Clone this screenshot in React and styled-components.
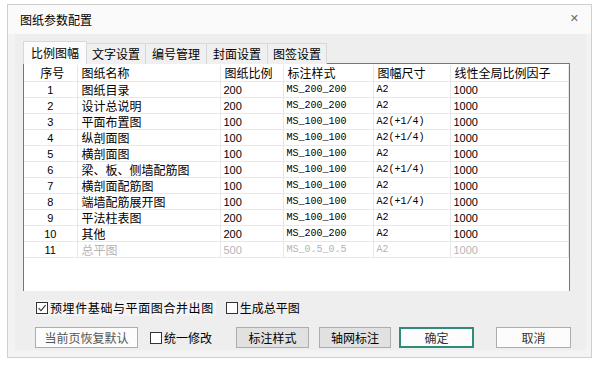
import React from 'react'
import styled, { createGlobalStyle } from 'styled-components'

const GlobalStyle = createGlobalStyle`
  body {
    margin: 0;
    background: #ffffff;
    font-family: "Noto Sans CJK SC", sans-serif;
    font-size: 12px;
    color: #000;
  }
`

const Dialog = styled.div`
  box-sizing: border-box;
  margin: 4px 0 0 7px;
  width: 585px;
  height: 354px;
  border: 1px solid #cfcfcf;
  background: #f3f3f3;
  display: flex;
  flex-direction: column;
`

const TitleBar = styled.div`
  height: 29px;
  flex: none;
  background: #fafafa;
  display: flex;
  align-items: center;
  justify-content: space-between;
  padding: 0 12px;
  font-size: 12px;
  line-height: 12px;
`

const Close = styled.span`
  font-family: "DejaVu Sans", sans-serif;
  font-size: 11px;
  color: #6a6a6a;
  margin-top: -1px;
`

const Body = styled.div`
  flex: 1;
  padding: 0 7px 7px 7px;
  display: flex;
`

const Inner = styled.div`
  flex: 1;
  background: #eeeeee;
  padding: 7px 16px 0 8px;
  display: flex;
  flex-direction: column;
`

const Tabs = styled.div`
  display: flex;
  align-items: flex-end;
  height: 23px;
  margin-left: 1px;
`

const Tab = styled.div`
  box-sizing: border-box;
  height: ${p => (p.$active ? '23px' : '21px')};
  padding: 0 ${p => p.$pad || 5}px;
  display: flex;
  align-items: center;
  font-size: 12px;
  line-height: 12px;
  background: ${p => (p.$active ? '#fbfbfb' : '#f0f0f0')};
  border: 1px solid #d8d8d8;
  border-bottom: none;
  margin-left: -1px;
  position: relative;
  z-index: ${p => (p.$active ? 1 : 0)};
`

const Panel = styled.div`
  box-sizing: border-box;
  height: 228px;
  background: #ffffff;
  border: 1px solid #767676;
  border-bottom: none;
  padding: 1px 0 0 0;
  margin-top: -1px;
`

const Table = styled.table`
  border-collapse: collapse;
  table-layout: fixed;
  width: 544px;
`

const Head = styled.th`
  height: 16px;
  padding: 0 0 0 4px;
  font-weight: normal;
  font-size: 12px;
  line-height: 14px;
  text-align: ${p => (p.$center ? 'center' : 'left')};
  border-right: 1px solid #e8e8e8;
  border-bottom: 1px solid #e8e8e8;
  white-space: nowrap;
  overflow: hidden;
`

const Cell = styled.td`
  height: 15px;
  padding: 0 0 0 ${p => (p.$center ? 0 : p.$pad || 4)}px;
  font-family: ${p =>
    p.$mono
      ? '"Liberation Mono", "Noto Sans CJK SC", monospace'
      : p.$num
        ? '"Liberation Sans", "Noto Sans CJK SC", sans-serif'
        : '"Noto Sans CJK SC", sans-serif'};
  font-size: ${p => (p.$mono ? 10 : p.$num ? 11 : 12)}px;
  line-height: 14px;
  text-align: ${p => (p.$center ? 'center' : 'left')};
  color: ${p => (p.$off ? '#b4b4b4' : '#000')};
  border-right: 1px solid #e8e8e8;
  border-bottom: 1px solid #e8e8e8;
  white-space: nowrap;
  overflow: hidden;
`

const Options = styled.div`
  display: flex;
  flex-direction: column;
  padding: 9px 0 0 12px;
  margin-right: -16px;
  gap: 11px;
`

const Row = styled.div`
  display: flex;
  align-items: center;
`

const CheckLabel = styled.label`
  flex: none;
  display: flex;
  align-items: center;
  gap: 2px;
  height: 16px;
  padding: 0 2px 0 1px;
  font-size: 12px;
  line-height: 12px;
  color: #000;
  white-space: nowrap;
  letter-spacing: ${p => p.$ls || 0}px;
  background: ${p => (p.$focus ? '#f4f4f4' : 'transparent')};
  margin-right: ${p => p.$mr || 0}px;
`

const Box = styled.span`
  box-sizing: border-box;
  width: 12px;
  height: 12px;
  border: 1px solid #333;
  background: #fff;
  display: flex;
  align-items: center;
  justify-content: center;
`

const Button = styled.button`
  flex: none;
  box-sizing: border-box;
  width: ${p => p.$w}px;
  height: 21px;
  padding: 0;
  margin-right: ${p => p.$mr || 0}px;
  font-family: "Noto Sans CJK SC", sans-serif;
  font-size: 12px;
  line-height: 12px;
  white-space: nowrap;
  color: ${p => p.$color || '#000'};
  background: ${p => (p.$gray ? '#e1e1e1' : '#fcfcfc')};
  border: ${p => (p.$primary ? '2px solid #2f8c7b' : '1px solid #adadad')};
`

const Check = ({ checked, label, focus, mr, ls }) => (
  <CheckLabel $focus={focus} $mr={mr} $ls={ls}>
    <Box>
      {checked && (
        <svg width='10' height='10' viewBox='0 0 10 10'>
          <path d='M1.5 5.2 L4 7.6 L8.6 2.2' fill='none' stroke='#333' strokeWidth='1.1' />
        </svg>
      )}
    </Box>
    {label}
  </CheckLabel>
)

const rows = [
  ['1', '图纸目录', '200', 'MS_200_200', 'A2', '1000'],
  ['2', '设计总说明', '200', 'MS_200_200', 'A2', '1000'],
  ['3', '平面布置图', '100', 'MS_100_100', 'A2(+1/4)', '1000'],
  ['4', '纵剖面图', '100', 'MS_100_100', 'A2(+1/4)', '1000'],
  ['5', '横剖面图', '100', 'MS_100_100', 'A2', '1000'],
  ['6', '梁、板、侧墙配筋图', '100', 'MS_100_100', 'A2(+1/4)', '1000'],
  ['7', '横剖面配筋图', '100', 'MS_100_100', 'A2', '1000'],
  ['8', '端墙配筋展开图', '100', 'MS_100_100', 'A2(+1/4)', '1000'],
  ['9', '平法柱表图', '200', 'MS_100_100', 'A2', '1000'],
  ['10', '其他', '200', 'MS_200_200', 'A2', '1000'],
  ['11', '总平图', '500', 'MS_0.5_0.5', 'A2', '1000', true]
]

const tabs = [
  ['比例图幅', 7],
  ['文字设置', 5],
  ['编号管理', 6],
  ['封面设置', 6],
  ['图签设置', 5]
]

const App = () => (
  <React.Fragment>
    <GlobalStyle />
    <Dialog>
      <TitleBar>
        <span>图纸参数配置</span>
        <Close>✕</Close>
      </TitleBar>
      <Body>
        <Inner>
          <Tabs>
            {tabs.map(([t, pad], i) => (
              <Tab key={t} $active={i === 0} $pad={pad}>
                {t}
              </Tab>
            ))}
          </Tabs>
          <Panel>
            <Table>
              <colgroup>
                <col style={{ width: 53 }} />
                <col style={{ width: 143 }} />
                <col style={{ width: 63 }} />
                <col style={{ width: 90 }} />
                <col style={{ width: 77 }} />
                <col style={{ width: 118 }} />
              </colgroup>
              <thead>
                <tr>
                  <Head $center>序号</Head>
                  <Head>图纸名称</Head>
                  <Head>图纸比例</Head>
                  <Head>标注样式</Head>
                  <Head>图幅尺寸</Head>
                  <Head>线性全局比例因子</Head>
                </tr>
              </thead>
              <tbody>
                {rows.map(([n, name, scale, style, size, factor, off]) => (
                  <tr key={n}>
                    <Cell $center $num>{n}</Cell>
                    <Cell $off={off}>{name}</Cell>
                    <Cell $num $pad={3} $off={off}>{scale}</Cell>
                    <Cell $mono $pad={3} $off={off}>{style}</Cell>
                    <Cell $mono $pad={3} $off={off}>{size}</Cell>
                    <Cell $num $pad={3} $off={off}>{factor}</Cell>
                  </tr>
                ))}
              </tbody>
            </Table>
          </Panel>
          <Options>
            <Row>
              <Check checked focus ls={0.6} label='预埋件基础与平面图合并出图' mr={9} />
              <Check label='生成总平图' />
            </Row>
            <Row>
              <Button $w={103} $mr={11} $color='#555'>当前页恢复默认</Button>
              <Check label='统一修改' mr={22} />
              <Button $w={73} $gray $mr={10}>标注样式</Button>
              <Button $w={72} $gray $mr={8}>轴网标注</Button>
              <Button $w={75} $primary $mr={22} $color='#333'>确定</Button>
              <Button $w={75} $color='#333'>取消</Button>
            </Row>
          </Options>
        </Inner>
      </Body>
    </Dialog>
  </React.Fragment>
)

export default App
